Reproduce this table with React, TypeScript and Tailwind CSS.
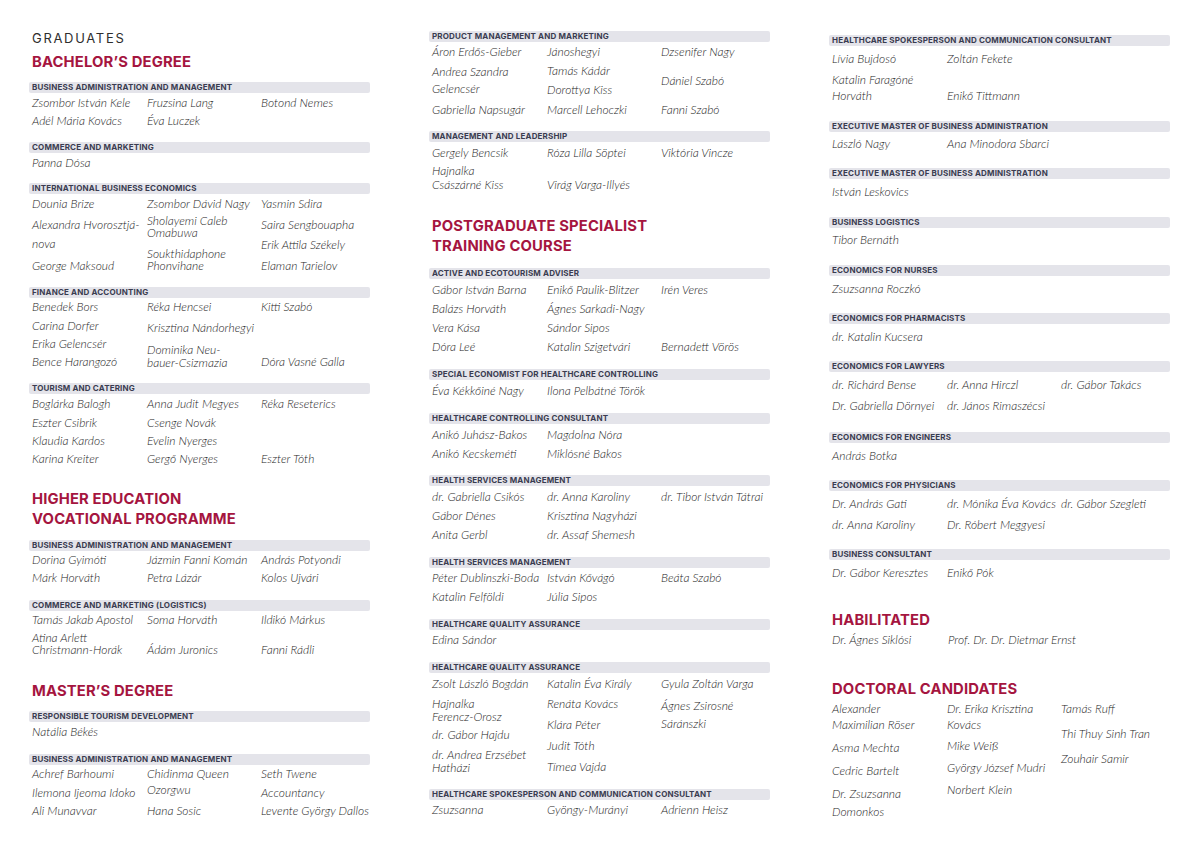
import React from "react";

type Line = string | [string, string] | [string, string, string];
type Block =
  | { k: "title"; t: string; mt: string }
  | { k: "h"; t: string[]; mt: string }
  | { k: "bar"; t: string; mt: string }
  | { k: "n"; mt: string; cols: Line[][] };

const col1: Block[] = [
  { k: "title", t: "GRADUATES", mt: "mt-[29px]" },
  { k: "h", t: ["BACHELOR’S DEGREE"], mt: "mt-[5px]" },
  { k: "bar", t: "BUSINESS ADMINISTRATION AND MANAGEMENT", mt: "mt-[9.5px]" },
  {
    k: "n",
    mt: "mt-[1.5px]",
    cols: [["Zsombor István Kele", "Adél Mária Kovács"], ["Fruzsina Lang", "Éva Luczek"], ["Botond Nemes"]],
  },
  { k: "bar", t: "COMMERCE AND MARKETING", mt: "mt-[11.5px]" },
  { k: "n", mt: "mt-[1.5px]", cols: [["Panna Dósa"], [], []] },
  { k: "bar", t: "INTERNATIONAL BUSINESS ECONOMICS", mt: "mt-[10.5px]" },
  {
    k: "n",
    mt: "mt-[1.5px]",
    cols: [
      ["Dounia Brize", ["Alexandra Hvorosztjá-", "mt-[3px]"], ["nova", "mt-[1px]"], ["George Maksoud", "mt-[4px]"]],
      [
        "Zsombor Dávid Nagy",
        ["Sholayemi Caleb\nOmabuwa", "-mt-[1px]", "leading-[12px] py-[3px]"],
        ["Soukthidaphone\nPhonvihane", "mt-[3px]", "leading-[12px] py-[3px]"],
      ],
      ["Yasmin Sdira", ["Saira Sengbouapha", "mt-[3px]"], ["Erik Attila Székely", "mt-[2px]"], ["Elaman Tarielov", "mt-[3px]"]],
    ],
  },
  { k: "bar", t: "FINANCE AND ACCOUNTING", mt: "mt-[11.5px]" },
  {
    k: "n",
    mt: "mt-[0.5px]",
    cols: [
      ["Benedek Bors", ["Carina Dorfer", "mt-[1px]"], "Erika Gelencsér", "Bence Harangozó"],
      [
        "Réka Hencsei",
        ["Krisztina Nándorhegyi", "mt-[3px]"],
        ["Dominika Neu-\nbauer-Csizmazia", "mt-[3px]", "leading-[13px] py-[2.5px]"],
      ],
      ["Kitti Szabó", ["Dóra Vasné Galla", "mt-[37px]"]],
    ],
  },
  { k: "bar", t: "TOURISM AND CATERING", mt: "mt-[11.5px]" },
  {
    k: "n",
    mt: "mt-[1.5px]",
    cols: [
      ["Boglárka Balogh", ["Eszter Csibrik", "mt-[1px]"], "Klaudia Kardos", "Karina Kreiter"],
      ["Anna Judit Megyes", ["Csenge Novák", "mt-[1px]"], "Evelin Nyerges", "Gergő Nyerges"],
      ["Réka Reseterics", ["Eszter Tóth", "mt-[37px]"]],
    ],
  },
  { k: "h", t: ["HIGHER EDUCATION", "VOCATIONAL PROGRAMME"], mt: "mt-[21px]" },
  { k: "bar", t: "BUSINESS ADMINISTRATION AND MANAGEMENT", mt: "mt-[10.5px]" },
  {
    k: "n",
    mt: "mt-[0.5px]",
    cols: [
      ["Dorina Gyimóti", "Márk Horváth"],
      ["Jázmin Fanni Komán", "Petra Lázár"],
      ["András Potyondi", "Kolos Ujvári"],
    ],
  },
  { k: "bar", t: "COMMERCE AND MARKETING (LOGISTICS)", mt: "mt-[12.5px]" },
  {
    k: "n",
    mt: "mt-[0.5px]",
    cols: [
      ["Tamás Jakab Apostol", ["Atina Arlett\nChristmann-Horák", "", "leading-[12px] py-[3px]"]],
      ["Soma Horváth", ["Ádám Juronics", "mt-[12px]"]],
      ["Ildikó Márkus", ["Fanni Rádli", "mt-[12px]"]],
    ],
  },
  { k: "h", t: ["MASTER’S DEGREE"], mt: "mt-[22px]" },
  { k: "bar", t: "RESPONSIBLE TOURISM DEVELOPMENT", mt: "mt-[9.5px]" },
  { k: "n", mt: "mt-[1.5px]", cols: [["Natália Békés"], [], []] },
  { k: "bar", t: "BUSINESS ADMINISTRATION AND MANAGEMENT", mt: "mt-[12.5px]" },
  {
    k: "n",
    mt: "mt-[0.5px]",
    cols: [
      ["Achref Barhoumi", ["Ilemona Ijeoma Idoko", "mt-[1px]"], "Ali Munavvar"],
      [["Chidinma Queen\nOzorgwu", "", "leading-[16px] py-[1px]"], ["Hana Sosic", "mt-[3px]"]],
      ["Seth Twene", ["Accountancy", "mt-[1px]"], "Levente György Dallos"],
    ],
  },
];

const col2: Block[] = [
  { k: "bar", t: "PRODUCT MANAGEMENT AND MARKETING", mt: "mt-[30.5px]" },
  {
    k: "n",
    mt: "mt-[1.5px]",
    cols: [
      ["Áron Erdős-Gieber", ["Andrea Szandra", "mt-[2px]"], ["Gelencsér", "-mt-[1px]"], ["Gabriella Napsugár", "mt-[3px]"]],
      ["Jánoshegyi", ["Tamás Kádár", "mt-[1px]"], ["Dorottya Kiss", "mt-[1px]"], ["Marcell Lehoczki", "mt-[2px]"]],
      ["Dzsenifer Nagy", ["Dániel Szabó", "mt-[11px]"], ["Fanni Szabó", "mt-[11px]"]],
    ],
  },
  { k: "bar", t: "MANAGEMENT AND LEADERSHIP", mt: "mt-[11.5px]" },
  {
    k: "n",
    mt: "mt-[2.5px]",
    cols: [
      ["Gergely Bencsik", ["Hajnalka\nCsászárné Kiss", "", "leading-[14px] py-[2px]"]],
      ["Róza Lilla Söptei", ["Virág Varga-Illyés", "mt-[14px]"]],
      ["Viktória Vincze"],
    ],
  },
  { k: "h", t: ["POSTGRADUATE SPECIALIST", "TRAINING COURSE"], mt: "mt-[22px]" },
  { k: "bar", t: "ACTIVE AND ECOTOURISM ADVISER", mt: "mt-[11.5px]" },
  {
    k: "n",
    mt: "mt-[2.5px]",
    cols: [
      ["Gábor István Barna", ["Balázs Horváth", "mt-[1px]"], ["Vera Kása", "mt-[1px]"], ["Dóra Leé", "mt-[1px]"]],
      ["Enikő Paulik-Blitzer", ["Ágnes Sarkadi-Nagy", "mt-[1px]"], ["Sándor Sipos", "mt-[1px]"], ["Katalin Szigetvári", "mt-[1px]"]],
      ["Irén Veres", ["Bernadett Vörös", "mt-[39px]"]],
    ],
  },
  { k: "bar", t: "SPECIAL ECONOMIST FOR HEALTHCARE CONTROLLING", mt: "mt-[12.5px]" },
  { k: "n", mt: "mt-[2.5px]", cols: [["Éva Kékkőiné Nagy"], ["Ilona Pelbátné Török"], []] },
  { k: "bar", t: "HEALTHCARE CONTROLLING CONSULTANT", mt: "mt-[12.5px]" },
  {
    k: "n",
    mt: "mt-[2.5px]",
    cols: [
      ["Anikó Juhász-Bakos", ["Anikó Kecskeméti", "mt-[1px]"]],
      ["Magdolna Nóra", ["Miklósné Bakos", "mt-[1px]"]],
      [],
    ],
  },
  { k: "bar", t: "HEALTH SERVICES MANAGEMENT", mt: "mt-[11.5px]" },
  {
    k: "n",
    mt: "mt-[2.5px]",
    cols: [
      ["dr. Gabriella Csikós", ["Gábor Dénes", "mt-[1px]"], ["Anita Gerbl", "mt-[1px]"]],
      ["dr. Anna Karoliny", ["Krisztina Nagyházi", "mt-[1px]"], ["dr. Assaf Shemesh", "mt-[1px]"]],
      ["dr. Tibor István Tátrai"],
    ],
  },
  { k: "bar", t: "HEALTH SERVICES MANAGEMENT", mt: "mt-[12.5px]" },
  {
    k: "n",
    mt: "mt-[1.5px]",
    cols: [
      ["Péter Dublinszki-Boda", ["Katalin Felföldi", "mt-[1px]"]],
      ["István Kővágó", ["Júlia Sipos", "mt-[1px]"]],
      ["Beáta Szabó"],
    ],
  },
  { k: "bar", t: "HEALTHCARE QUALITY ASSURANCE", mt: "mt-[12.5px]" },
  { k: "n", mt: "mt-[1.5px]", cols: [["Edina Sándor"], [], []] },
  { k: "bar", t: "HEALTHCARE QUALITY ASSURANCE", mt: "mt-[12.5px]" },
  {
    k: "n",
    mt: "mt-[2.5px]",
    cols: [
      [
        "Zsolt László Bogdán",
        ["Hajnalka\nFerencz-Orosz", "mt-[1px]", "leading-[13px] py-[2.5px]"],
        ["dr. Gábor Hajdu", "mt-[1px]"],
        ["dr. Andrea Erzsébet\nHatházi", "mt-[1px]", "leading-[13px] py-[2.5px]"],
      ],
      [
        "Katalin Éva Király",
        ["Renáta Kovács", "mt-[2px]"],
        ["Klára Péter", "mt-[3px]"],
        ["Judit Tóth", "mt-[3px]"],
        ["Tímea Vajda", "mt-[3px]"],
      ],
      ["Gyula Zoltán Varga", ["Ágnes Zsirosné", "mt-[4px]"], "Sáránszki"],
    ],
  },
  { k: "bar", t: "HEALTHCARE SPOKESPERSON AND COMMUNICATION CONSULTANT", mt: "mt-[12.5px]" },
  { k: "n", mt: "mt-[1.5px]", cols: [["Zsuzsanna"], ["Gyöngy-Murányi"], ["Adrienn Heisz"]] },
];

const col3: Block[] = [
  { k: "bar", t: "HEALTHCARE SPOKESPERSON AND COMMUNICATION CONSULTANT", mt: "mt-[34.5px]" },
  {
    k: "n",
    mt: "mt-[4.5px]",
    cols: [
      ["Lívia Bujdosó", ["Katalin Faragóné\nHorváth", "mt-[3px]", "leading-[16px] py-[1px]"]],
      ["Zoltán Fekete", ["Enikő Tittmann", "mt-[19px]"]],
      [],
    ],
  },
  { k: "bar", t: "EXECUTIVE MASTER OF BUSINESS ADMINISTRATION", mt: "mt-[15.5px]" },
  { k: "n", mt: "mt-[3.5px]", cols: [["László Nagy"], ["Ana Minodora Sbarci"], []] },
  { k: "bar", t: "EXECUTIVE MASTER OF BUSINESS ADMINISTRATION", mt: "mt-[14.5px]" },
  { k: "n", mt: "mt-[4.5px]", cols: [["István Leskovics"], [], []] },
  { k: "bar", t: "BUSINESS LOGISTICS", mt: "mt-[15.5px]" },
  { k: "n", mt: "mt-[3.5px]", cols: [["Tibor Bernáth"], [], []] },
  { k: "bar", t: "ECONOMICS FOR NURSES", mt: "mt-[15.5px]" },
  { k: "n", mt: "mt-[4.5px]", cols: [["Zsuzsanna Roczkó"], [], []] },
  { k: "bar", t: "ECONOMICS FOR PHARMACISTS", mt: "mt-[14.5px]" },
  { k: "n", mt: "mt-[4.5px]", cols: [["dr. Katalin Kucsera"], [], []] },
  { k: "bar", t: "ECONOMICS FOR LAWYERS", mt: "mt-[14.5px]" },
  {
    k: "n",
    mt: "mt-[4.5px]",
    cols: [
      ["dr. Richárd Bense", ["Dr. Gabriella Dörnyei", "mt-[3px]"]],
      ["dr. Anna Hirczl", ["dr. János Rimaszécsi", "mt-[3px]"]],
      ["dr. Gábor Takács"],
    ],
  },
  { k: "bar", t: "ECONOMICS FOR ENGINEERS", mt: "mt-[16.5px]" },
  { k: "n", mt: "mt-[4.5px]", cols: [["András Botka"], [], []] },
  { k: "bar", t: "ECONOMICS FOR PHYSICIANS", mt: "mt-[14.5px]" },
  {
    k: "n",
    mt: "mt-[4.5px]",
    cols: [
      ["Dr. András Gati", ["dr. Anna Karoliny", "mt-[3px]"]],
      ["dr. Mónika Éva Kovács", ["Dr. Róbert Meggyesi", "mt-[3px]"]],
      ["dr. Gábor Szegleti"],
    ],
  },
  { k: "bar", t: "BUSINESS CONSULTANT", mt: "mt-[14.5px]" },
  { k: "n", mt: "mt-[4.5px]", cols: [["Dr. Gábor Keresztes"], ["Enikő Pók"], []] },
  { k: "h", t: ["HABILITATED"], mt: "mt-[28px]" },
  { k: "n", mt: "mt-[1px]", cols: [["Dr. Ágnes Siklósi"], [["Prof. Dr. Dr. Dietmar Ernst", "ml-[1px]"]], []] },
  { k: "h", t: ["DOCTORAL CANDIDATES"], mt: "mt-[30px]" },
  {
    k: "n",
    mt: "mt-[1px]",
    cols: [
      [
        ["Alexander\nMaximilian Röser", "", "leading-[16px] py-[1px]"],
        ["Asma Mechta", "mt-[5px]"],
        ["Cedric Bartelt", "mt-[5px]"],
        ["Dr. Zsuzsanna", "mt-[5px]"],
        "Domonkos",
      ],
      [
        ["Dr. Erika Krisztina\nKovács", "", "leading-[16px] py-[1px]"],
        ["Mike Weiß", "mt-[3px]"],
        ["György József Mudri", "mt-[4px]"],
        ["Norbert Klein", "mt-[4px]"],
      ],
      ["Tamás Ruff", ["Thi Thuy Sinh Tran", "mt-[7px]"], ["Zouhair Samir", "mt-[7px]"]],
    ],
  },
];

const headFont = "font-['Inter','Lato',sans-serif]";
const nameFont = "font-['Lato','Liberation_Sans',sans-serif]";

function Name({ line }: { line: Line }) {
  const arr = typeof line === "string" ? [line, "", ""] : [line[0], line[1], line[2] ?? ""];
  const [t, mt, box] = arr;
  const boxCls = box || "h-[18px] leading-[18px]";
  return <div className={`whitespace-pre ${mt} ${boxCls}`}>{t}</div>;
}

function Render({ b }: { b: Block }) {
  if (b.k === "title")
    return (
      <div
        className={`${b.mt} pl-[3px] h-[18px] leading-[18px] text-[13px] tracking-[0.13em] text-[#2e2e2e] ${headFont} font-normal`}
      >
        {b.t}
      </div>
    );
  if (b.k === "h")
    return (
      <div
        className={`${b.mt} pl-[3px] text-[14.8px] leading-[20px] font-bold text-[#a5153f] ${headFont} tracking-[0.01em]`}
      >
        {b.t.map((l) => (
          <div key={l}>{l}</div>
        ))}
      </div>
    );
  if (b.k === "bar")
    return (
      <div
        className={`${b.mt} h-[11px] rounded-[2px] bg-[#e4e4ea] pl-[3px] flex items-center text-[8px] font-bold text-[#3a3c50] ${headFont} tracking-[0.02em] whitespace-nowrap`}
      >
        {b.t}
      </div>
    );
  return (
    <div
      className={`${b.mt} pl-[3px] grid grid-cols-[115px_114px_1fr] items-start text-[12px] italic font-light text-[#262626] ${nameFont}`}
    >
      {b.cols.map((c, i) => (
        <div key={i} className="flex flex-col">
          {c.map((l, j) => (
            <Name key={j} line={l} />
          ))}
        </div>
      ))}
    </div>
  );
}

function Column({ blocks }: { blocks: Block[] }) {
  return (
    <div className="w-[341px] flex flex-col">
      {blocks.map((b, i) => (
        <Render key={i} b={b} />
      ))}
    </div>
  );
}

export default function App() {
  return (
    <div className="w-[1200px] h-[848px] bg-white overflow-hidden flex pl-[29px] gap-[59px]">
      <Column blocks={col1} />
      <Column blocks={col2} />
      <Column blocks={col3} />
    </div>
  );
}
